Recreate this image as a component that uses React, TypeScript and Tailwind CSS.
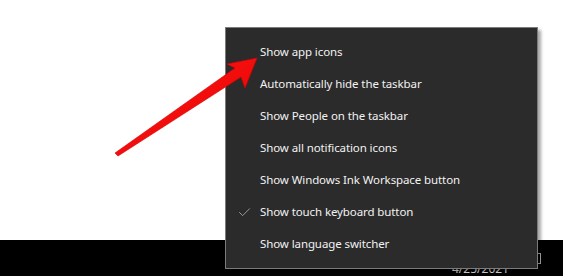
import { Check } from "lucide-react";

const items = [
    { label: "Show app icons", checked: false },
    { label: "Automatically hide the taskbar", checked: false },
    { label: "Show People on the taskbar", checked: false },
    { label: "Show all notification icons", checked: false },
    { label: "Show Windows Ink Workspace button", checked: false },
    { label: "Show touch keyboard button", checked: true },
    { label: "Show language switcher", checked: false },
];

function Arrow() {
    return (
        <svg className="absolute left-0 top-0 pointer-events-none" width="563" height="276" viewBox="0 0 563 276">
            <defs>
                <linearGradient id="arrowFill" x1="0" y1="0" x2="1" y2="1">
                    <stop offset="0" stopColor="#ff1a1a" />
                    <stop offset="1" stopColor="#e60000" />
                </linearGradient>
            </defs>
            <polygon
                points="115,153 235,68 227,64 257,58 245,88 241,77 118,156"
                fill="url(#arrowFill)"
                stroke="#d40000"
                strokeWidth="0.6"
                strokeLinejoin="round"
            />
        </svg>
    );
}

export default function App() {
    return (
        <div className="relative w-[563px] h-[276px] overflow-hidden bg-white" style={{ fontFamily: '"Segoe UI", "Noto Sans", sans-serif' }}>
            {/* page + taskbar */}
            <div className="flex flex-col h-full">
                <div className="h-[240px] bg-white" />
                <div className="flex-1 bg-black relative">
                    <div className="absolute left-[530px] top-[13px] w-[11px] h-[11px] border border-[#bdbdbd]" />
                    <div className="absolute left-[452px] top-[23px] text-[12px] leading-none text-[#e6e6e6]">4/25/2021</div>
                </div>
            </div>

            {/* context menu */}
            <div className="absolute left-[225px] top-[27px] w-[313px] border border-[#7b7b7b] bg-[#2b2b2b] py-2 shadow-[3px_3px_3px_rgba(0,0,0,0.35)]">
                {items.map((item) => (
                    <div key={item.label} className="flex items-center h-8 text-[11.5px] tracking-[-0.1px] text-[#f2f2f2]">
                        <div className="w-[34px] flex justify-end pr-[8px]">
                            {item.checked && <Check size={15} strokeWidth={1.2} className="text-[#bcbcbc]" />}
                        </div>
                        <span>{item.label}</span>
                    </div>
                ))}
            </div>

            <Arrow />
        </div>
    );
}
